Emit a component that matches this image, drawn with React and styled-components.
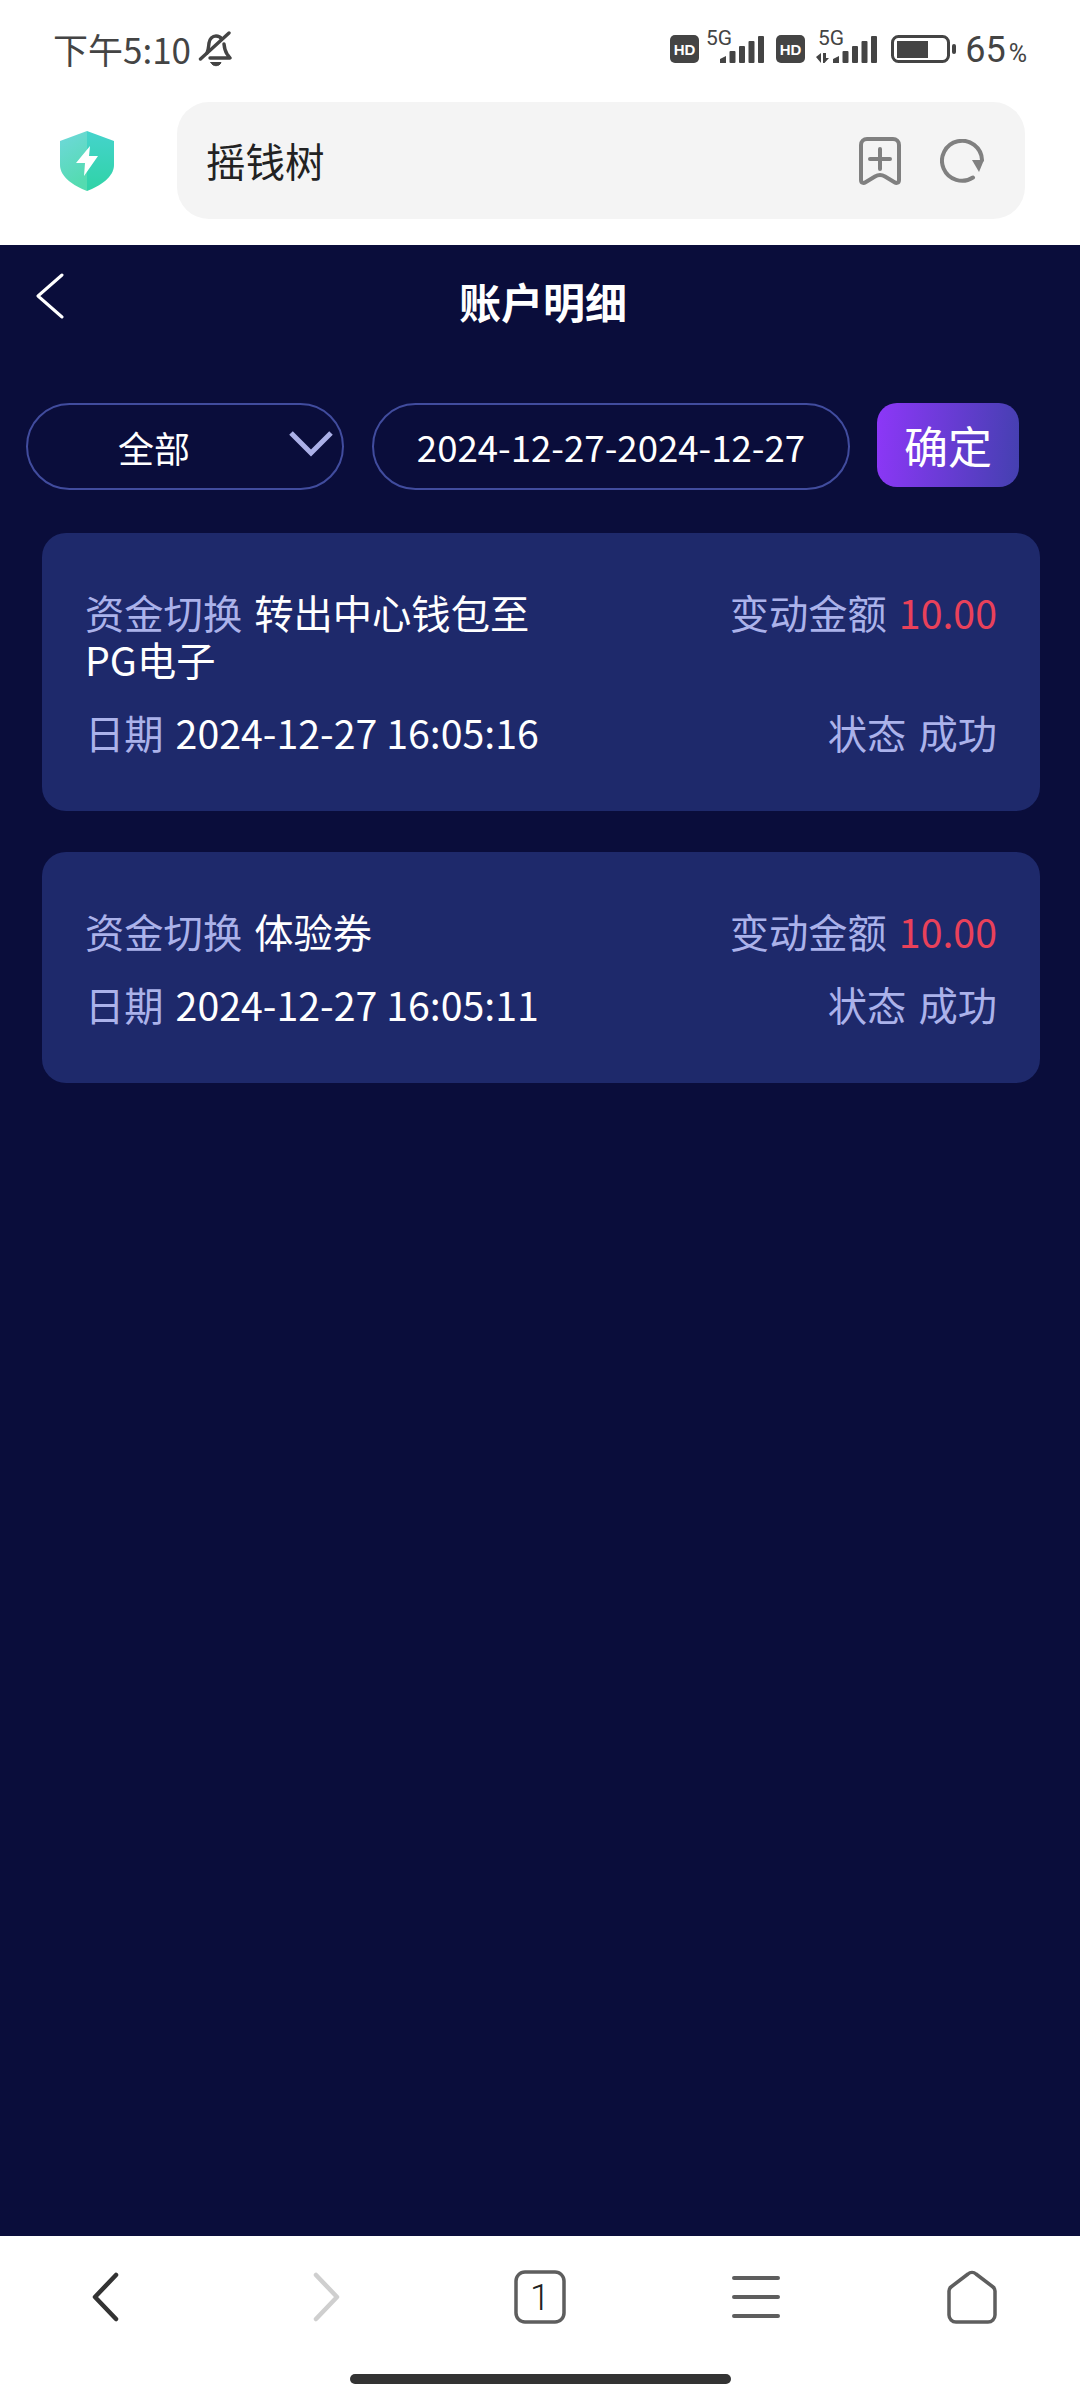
import React from "react";
import styled, { createGlobalStyle } from "styled-components";

const GlobalStyle = createGlobalStyle`
  html, body {
    margin: 0;
    padding: 0;
    background: #fff;
  }
  * {
    box-sizing: border-box;
  }
`;

const Page = styled.div`
  width: 1080px;
  height: 2400px;
  display: flex;
  flex-direction: column;
  font-family: "Noto Sans CJK SC", "Noto Sans", sans-serif;
  background: #fff;
  overflow: hidden;
`;

const StatusBar = styled.div`
  height: 102px;
  padding: 0 53px 4px 53px;
  display: flex;
  align-items: center;
  justify-content: space-between;
  color: #444;
`;

const StatusGroup = styled.div`
  display: flex;
  align-items: center;
`;

const IconSlot = styled.span`
  display: flex;
  margin-left: ${({ $left }) => $left || 0}px;
  margin-bottom: ${({ $lift }) => $lift || 0}px;
`;

const Clock = styled.span`
  font-size: 35px;
  line-height: 40px;
`;

const Battery = styled.span`
  margin: 5px 0 0 8px;
  font-family: "Roboto", sans-serif;
  font-size: 36px;
  line-height: 40px;
`;

const Percent = styled.span`
  font-size: 25px;
  margin-left: 3px;
`;

const AddressRow = styled.div`
  height: 143px;
  padding: 0 55px 26px 60px;
  display: flex;
  align-items: center;
  gap: 63px;
`;

const AddressPill = styled.div`
  flex: 1;
  height: 117px;
  padding: 0 41px 0 29px;
  display: flex;
  align-items: center;
  justify-content: space-between;
  background: #f4f4f4;
  border-radius: 32px;
`;

const SiteName = styled.span`
  margin-bottom: 2px;
  font-size: 39.5px;
  color: #222;
`;

const AddressTools = styled.div`
  display: flex;
  align-items: center;
  gap: 39px;
`;

const Main = styled.main`
  flex: 1;
  background: #0a0d3b;
  display: flex;
  flex-direction: column;
`;

const Header = styled.header`
  height: 116px;
  padding-left: 36px;
  display: grid;
  grid-template-columns: 1fr auto 1fr;
  align-items: center;
`;

const BackLink = styled.a`
  display: flex;
  margin-bottom: 14px;
`;

const Title = styled.h1`
  margin: 0 0 6px -30px;
  font-size: 42px;
  font-weight: 700;
  color: #fff;
`;

const Filters = styled.div`
  margin-top: 42px;
  padding-left: 26px;
  display: flex;
  align-items: flex-start;
`;

const Field = styled.div`
  width: ${({ $width }) => $width}px;
  height: 87px;
  margin-right: ${({ $gap }) => $gap}px;
  display: flex;
  align-items: center;
  border: 2px solid #414c9e;
  border-radius: 44px;
  color: #fff;
  font-size: 36px;
`;

const SelectLabel = styled.span`
  flex: 1;
  padding-left: 90px;
`;

const SelectArrow = styled.svg`
  width: 44px;
  height: 26px;
  margin: 0 9px 6px 0;
`;

const DateRange = styled.span`
  width: 100%;
  text-align: center;
  font-size: 36.6px;
`;

const ConfirmButton = styled.button`
  width: 142px;
  height: 84px;
  padding: 0;
  border: 0;
  border-radius: 20px;
  background: linear-gradient(95deg, #8d37f8, #4440b0);
  color: #fff;
  font-family: inherit;
  font-size: 44px;
`;

const List = styled.div`
  margin: 43px 40px 0 42px;
  display: flex;
  flex-direction: column;
  gap: 41px;
`;

const Card = styled.div`
  padding: 55px 43px 56px;
  display: flex;
  flex-direction: column;
  gap: 26px;
  background: #1e296b;
  border-radius: 24px;
  font-size: 39.3px;
  line-height: 47px;
`;

const Row = styled.div`
  display: flex;
  justify-content: space-between;
  align-items: flex-start;
`;

const Cell = styled.div`
  max-width: ${({ $max }) => ($max ? `${$max}px` : "none")};
  white-space: ${({ $max }) => ($max ? "normal" : "nowrap")};
  color: #fff;
`;

const Label = styled.span`
  color: #abb2ea;
  margin-right: 12px;
`;

const Value = styled.span`
  color: ${({ $tone }) => $tone || "#fff"};
`;

const BottomNav = styled.nav`
  height: 164px;
  background: #fff;
  display: flex;
  flex-direction: column;
  align-items: center;
`;

const NavIcons = styled.div`
  width: 100%;
  height: 122px;
  display: grid;
  grid-template-columns: repeat(5, 1fr);
  align-items: center;
  justify-items: center;
`;

const ChevronSvg = styled.svg`
  margin-left: ${({ $dx }) => $dx}px;
`;

const HomeBar = styled.div`
  margin-top: 16px;
  width: 381px;
  height: 10px;
  border-radius: 5px;
  background: #333;
`;

const MutedBell = () => (
  <svg width="34" height="36" viewBox="0 0 34 36" fill="none" stroke="#444" strokeWidth="3.4" strokeLinecap="round" strokeLinejoin="round">
    <path d="M9 22c1.500-3 1.500-6 2-10 .6-4 3.400-7 7-7 2.500 0 4.400 1 5.700 3" />
    <path d="M26 13c.4 4 1 7 3 10l3 4H12" />
    <path d="M2.500 28 31 2" />
    <path d="M13 31.500h10c-.8 2.200-2.800 3.200-5 3.200s-4.200-1-5-3.200z" fill="#444" strokeWidth="1" />
  </svg>
);

const HdBadge = () => (
  <svg width="29" height="28" viewBox="0 0 29 28">
    <rect width="29" height="28" rx="5" fill="#444" />
    <text x="14.500" y="19.500" textAnchor="middle" fontFamily="Liberation Sans, sans-serif" fontWeight="700" fontSize="15" fill="#fff">HD</text>
  </svg>
);

// one sim: the 5G tag over five rising bars, arrows only when data is moving
const Signal = ({ arrows }) => {
  const width = arrows ? 61 : 58;
  const left = arrows ? 17 : 14;
  return (
    <svg width={width} height="40" viewBox={`0 0 ${width} 40`}>
      <text x={arrows ? 2 : 0} y="21" fontFamily="Roboto, sans-serif" fontSize="21" fill="#444">5G</text>
      <path d={`M${left} 39v-4l6-3v7z`} fill="#444" />
      {[0, 1, 2, 3].map((i) => (
        <rect key={i} x={left + 9.5 * (i + 1)} y={27 - i * 5} width="6" height={12 + i * 5} rx="1" fill="#444" />
      ))}
      {arrows && <path d="M0 33l5-4v10zM7 29h3v5h3l-4.500 5H7z" fill="#444" />}
    </svg>
  );
};

const BatteryIcon = () => (
  <svg width="66" height="28" viewBox="0 0 66 28">
    <rect x="1.500" y="1.500" width="56" height="25" rx="6" fill="none" stroke="#444" strokeWidth="3" />
    <rect x="6" y="6" width="31" height="17" fill="#444" />
    <rect x="61" y="9" width="4" height="10" rx="2" fill="#444" />
  </svg>
);

const ShieldLogo = () => (
  <svg width="54" height="60" viewBox="0 0 54 60">
    <defs>
      <linearGradient id="shieldLeft" x1="0" y1="0" x2="0.3" y2="1">
        <stop offset="0" stopColor="#6fd8dc" />
        <stop offset="1" stopColor="#54dbb0" />
      </linearGradient>
      <linearGradient id="shieldRight" x1="0" y1="0" x2="0" y2="1">
        <stop offset="0" stopColor="#45d3cc" />
        <stop offset="1" stopColor="#2fd3a6" />
      </linearGradient>
    </defs>
    <path d="M27 0 0 10v24c0 12 14 21 27 26z" fill="url(#shieldLeft)" />
    <path d="M27 0l27 10v24c0 12-14 21-27 26z" fill="url(#shieldRight)" />
    <path d="M30 15 16 32h9l-1 13 14-20h-9z" fill="#fff" />
  </svg>
);

const BookmarkAdd = () => (
  <svg width="42" height="48" viewBox="0 0 42 48" fill="none" stroke="#808080" strokeWidth="4" strokeLinecap="round" strokeLinejoin="round">
    <path d="M2 8a6 6 0 0 1 6-6h26a6 6 0 0 1 6 6v35c0 3-2.500 3.500-4.500 2.200L26 39.500c-3-1.800-7-1.800-10 0L6.500 45.200C4.500 46.500 2 46 2 43z" />
    <path d="M21 12v20M11 22h20" />
  </svg>
);

const Reload = () => (
  <svg width="44" height="44" viewBox="0 0 44 44" fill="none" stroke="#808080" strokeWidth="4" strokeLinecap="round">
    <path d="M33 38.500A20 20 0 1 1 42 21" />
    <path d="M32 21h12l-5 12z" fill="#808080" stroke="none" />
  </svg>
);

const Chevron = ({ dir, color, dx }) => (
  <ChevronSvg $dx={dx} width="54" height="54" viewBox="0 0 54 54" fill="none" stroke={color} strokeWidth="4.500" strokeLinecap="round" strokeLinejoin="round">
    <path d={dir === "left" ? "M38 5 17 27l21 22" : "M16 5l21 22-21 22"} />
  </ChevronSvg>
);

const TabCount = () => (
  <svg width="52" height="54" viewBox="0 0 52 54" fill="none">
    <rect x="2" y="2" width="48" height="50" rx="9" stroke="#5e5e5e" strokeWidth="3.500" />
    <text x="26" y="40" textAnchor="middle" fontFamily="Roboto, sans-serif" fontSize="36" fontWeight="300" fill="#222">1</text>
  </svg>
);

const MenuLines = () => (
  <svg width="50" height="44" viewBox="0 0 50 44" stroke="#5e5e5e" strokeWidth="4" strokeLinecap="round">
    <path d="M3 3h44M3 22h44M3 41h44" />
  </svg>
);

const HomeIcon = () => (
  <svg width="52" height="54" viewBox="0 0 52 54" fill="none" stroke="#5e5e5e" strokeWidth="3.500" strokeLinejoin="round">
    <path d="M3 21a5 5 0 0 1 2-4L22 4a6 6 0 0 1 8 0l17 13a5 5 0 0 1 2 4v24a7 7 0 0 1-7 7H10a7 7 0 0 1-7-7z" />
  </svg>
);

const records = [
  { detail: "转出中心钱包至PG电子", time: "2024-12-27 16:05:16" },
  { detail: "体验券", time: "2024-12-27 16:05:11" },
];

const App = () => (
  <Page>
    <GlobalStyle />
    <StatusBar>
      <StatusGroup>
        <Clock>下午5:10</Clock>
        <IconSlot $left={7}>
          <MutedBell />
        </IconSlot>
      </StatusGroup>
      <StatusGroup>
        <HdBadge />
        <IconSlot $left={7} $lift={10}>
          <Signal />
        </IconSlot>
        <IconSlot $left={12}>
          <HdBadge />
        </IconSlot>
        <IconSlot $left={11} $lift={10}>
          <Signal arrows />
        </IconSlot>
        <IconSlot $left={14}>
          <BatteryIcon />
        </IconSlot>
        <Battery>
          65<Percent>%</Percent>
        </Battery>
      </StatusGroup>
    </StatusBar>

    <AddressRow>
      <ShieldLogo />
      <AddressPill>
        <SiteName>摇钱树</SiteName>
        <AddressTools>
          <BookmarkAdd />
          <Reload />
        </AddressTools>
      </AddressPill>
    </AddressRow>

    <Main>
      <Header>
        <BackLink>
          <svg width="28" height="46" viewBox="0 0 28 46" fill="none" stroke="#fff" strokeWidth="3" strokeLinecap="round" strokeLinejoin="round">
            <path d="M26 2 2 23l24 21" />
          </svg>
        </BackLink>
        <Title>账户明细</Title>
      </Header>

      <Filters>
        <Field $width={318} $gap={28}>
          <SelectLabel>全部</SelectLabel>
          <SelectArrow viewBox="0 0 44 26" fill="none" stroke="#abb0e8" strokeWidth="5">
            <path d="M2 2l20 20L42 2" />
          </SelectArrow>
        </Field>
        <Field $width={478} $gap={27}>
          <DateRange>2024-12-27-2024-12-27</DateRange>
        </Field>
        <ConfirmButton>确定</ConfirmButton>
      </Filters>

      <List>
        {records.map((item) => (
          <Card key={item.time}>
            <Row>
              <Cell $max={480}>
                <Label>资金切换</Label>
                <Value>{item.detail}</Value>
              </Cell>
              <Cell>
                <Label>变动金额</Label>
                <Value $tone="#e9415a">10.00</Value>
              </Cell>
            </Row>
            <Row>
              <Cell>
                <Label>日期</Label>
                <Value>{item.time}</Value>
              </Cell>
              <Cell>
                <Label>状态</Label>
                <Value $tone="#abb2ea">成功</Value>
              </Cell>
            </Row>
          </Card>
        ))}
      </List>
    </Main>

    <BottomNav>
      <NavIcons>
        <Chevron dir="left" color="#333" dx={-6} />
        <Chevron dir="right" color="#cfcfcf" dx={6} />
        <TabCount />
        <MenuLines />
        <HomeIcon />
      </NavIcons>
      <HomeBar />
    </BottomNav>
  </Page>
);

export default App;
